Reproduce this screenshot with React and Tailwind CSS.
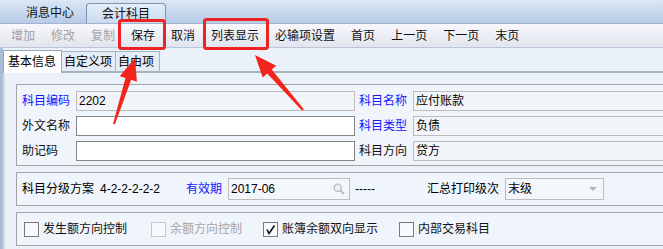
import React from "react";

const tools = [
  { t: "增加", off: true },
  { t: "修改", off: true },
  { t: "复制", off: true },
  { t: "保存" },
  { t: "取消" },
  { t: "列表显示" },
  { t: "必输项设置" },
  { t: "首页" },
  { t: "上一页" },
  { t: "下一页" },
  { t: "末页" },
];

const rows = [
  { l: "科目编码", lb: true, v: "2202", edit: false, r: "科目名称", rb: true, rv: "应付账款" },
  { l: "外文名称", lb: false, v: "", edit: true, r: "科目类型", rb: true, rv: "负债" },
  { l: "助记码", lb: false, v: "", edit: true, r: "科目方向", rb: false, rv: "贷方" },
];

const checks = [
  { t: "发生额方向控制", w: "w-[127px]" },
  { t: "余额方向控制", w: "w-[112px]", off: true },
  { t: "账簿余额双向显示", w: "w-[136px]", on: true },
  { t: "内部交易科目", w: "w-[160px]" },
];

const Box = ({ on, off }) => (
  <div
    className={`w-[15px] h-[15px] shrink-0 border bg-[#f7f9fc] flex items-center justify-center ${
      off ? "border-[#c4c8cc]" : "border-[#7a7a7a]"
    }`}
  >
    {on && (
      <svg width="11" height="11" viewBox="0 0 11 11">
        <path d="M2 5.5 L4 9.5 L9.5 1.5" fill="none" stroke="#111" strokeWidth="1.6" />
      </svg>
    )}
  </div>
);

export default function App() {
  return (
    <div className="relative w-[663px] h-[249px] overflow-hidden bg-[#eaf1f9] text-[12px] leading-[14px] text-black font-['Liberation_Sans','Noto_Sans_CJK_SC',sans-serif]">
      {/* window tabs */}
      <div className="h-[24px] flex items-end bg-linear-to-b from-[#dbe7f5] to-[#b7cbe6] border-b border-[#a3b5cf]">
        <div className="w-[86px] shrink-0 pl-[26px] pb-[3px] text-[#111]">消息中心</div>
        <div className="w-[80px] h-[20px] shrink-0 border border-b-0 border-[#7f94b4] rounded-t-[4px] bg-linear-to-b from-[#e4eef9] to-[#c9daef] flex items-center justify-center text-[#111]">
          会计科目
        </div>
      </div>

      {/* toolbar */}
      <div className="h-[24px] flex items-center pl-[3px] pt-[1px] bg-linear-to-b from-[#f8f8fd] to-[#e2e5ee] border-b border-[#b9c5d8]">
        {tools.map((b) => (
          <div key={b.t} className={`px-2 shrink-0 ${b.off ? "text-[#a3a3a3]" : "text-[#111]"}`}>
            {b.t}
          </div>
        ))}
      </div>

      {/* sub tabs */}
      <div className="h-[25px] flex items-end border-l-[3px] border-[#a9bdd6]">
        <div className="h-[23px] w-[59px] shrink-0 bg-white border border-b-0 border-[#9aa6b4] flex items-center pl-[4px]">基本信息</div>
        <div className="h-[22px] w-[54px] shrink-0 bg-[#e4ecf5] border-t border-r border-[#a8b4c2] flex items-center pl-[2px] border-b-2 border-b-[#a8b0b8]">自定义项</div>
        <div className="h-[22px] w-[44px] shrink-0 bg-[#e4ecf5] border-t border-r border-[#a8b4c2] flex items-center pl-[2px] border-b-2 border-b-[#a8b0b8]">自由项</div>
        <div className="flex-1 border-b-2 border-[#a8b0b8]" />
      </div>

      {/* content */}
      <div className="flex h-[176px]">
        <div className="w-[3px] shrink-0 bg-[#a9bdd6]" />
        <div className="w-[2px] shrink-0 bg-[#d4dce4]" />
        <div className="flex-1 min-w-0 flex flex-col gap-[6px] pl-[11px] pt-[11px]">
          {/* group 1 */}
          <div className="w-[700px] shrink-0 border border-[#a3a3a3] bg-[#eff5fb] flex flex-col gap-[5px] pl-[5px] pt-[6px] pb-[4px]">
            {rows.map((r) => (
              <div key={r.l} className="flex items-center h-[20px]">
                <div className={`w-[54px] shrink-0 ${r.lb ? "text-[#1515ff]" : "text-[#111]"}`}>{r.l}</div>
                <div
                  className={`w-[279px] h-[20px] shrink-0 border flex items-center pl-[2px] ${
                    r.edit ? "bg-white border-[#858585]" : "bg-[#f1f5f9] border-[#bdbdbd]"
                  }`}
                >
                  {r.v}
                </div>
                <div className={`w-[54px] shrink-0 ml-[4px] ${r.rb ? "text-[#1515ff]" : "text-[#111]"}`}>{r.r}</div>
                <div className="w-[290px] h-[20px] shrink-0 border border-[#bdbdbd] bg-[#f2f6fa] flex items-center pl-[2px]">
                  {r.rv}
                </div>
              </div>
            ))}
          </div>

          {/* group 2 */}
          <div className="w-[700px] h-[34px] shrink-0 border border-[#a3a3a3] bg-[#eff5fb] flex items-center pl-[5px]">
            <div className="w-[78px] shrink-0">科目分级方案</div>
            <div className="w-[86px] shrink-0">4-2-2-2-2-2</div>
            <div className="w-[42px] shrink-0 text-[#1515ff]">有效期</div>
            <div className="w-[122px] h-[22px] shrink-0 border border-[#bdbdbd] bg-[#f3f6fa] flex items-center justify-between pl-[2px] pr-[4px]">
              <span>2017-06</span>
              <svg width="12" height="12" viewBox="0 0 12 12">
                <circle cx="4.8" cy="4.8" r="3.6" fill="#eef1f4" stroke="#b8bcc0" strokeWidth="1.3" />
                <path d="M7.4 7.4 L11 11" stroke="#b8bcc0" strokeWidth="2" />
              </svg>
            </div>
            <div className="w-[77px] shrink-0 pl-[5px]">-----</div>
            <div className="w-[78px] shrink-0">汇总打印级次</div>
            <div className="w-[99px] h-[22px] shrink-0 border border-[#bdbdbd] bg-[#f3f6fa] flex items-center justify-between pl-[2px] pr-[6px]">
              <span>末级</span>
              <svg width="8" height="4" viewBox="0 0 8 4">
                <path d="M0 0 H8 L4 4 Z" fill="#b4b4b4" />
              </svg>
            </div>
          </div>

          {/* group 3 */}
          <div className="w-[700px] h-[34px] shrink-0 border border-[#a3a3a3] bg-[#eff5fb] flex items-center pl-[7px]">
            {checks.map((c) => (
              <div key={c.t} className={`${c.w} shrink-0 flex items-center gap-[4px]`}>
                <Box on={c.on} off={c.off} />
                <span className={c.off ? "text-[#a6a6a6]" : "text-[#111]"}>{c.t}</span>
              </div>
            ))}
          </div>
        </div>
      </div>

      {/* annotations */}
      <svg className="absolute inset-0 pointer-events-none" width="663" height="249" viewBox="0 0 663 249">
        <rect x="119.5" y="20.5" width="45" height="28" rx="2" fill="none" stroke="#ec2323" strokeWidth="3" />
        <rect x="204.5" y="19.5" width="63" height="29" rx="2" fill="none" stroke="#ec2323" strokeWidth="3" />
        <polygon
          points="114.95,124.3 131.19,79.86 136.9,81.68 135,58 119.76,76.22 125.47,78.04 113.05,123.7"
          fill="#f3241b"
        />
        <polygon
          points="303.75,109.34 271.73,69.6 276.25,65.65 255,55 262.69,77.49 267.21,73.54 302.25,110.66"
          fill="#f3241b"
        />
      </svg>
    </div>
  );
}
